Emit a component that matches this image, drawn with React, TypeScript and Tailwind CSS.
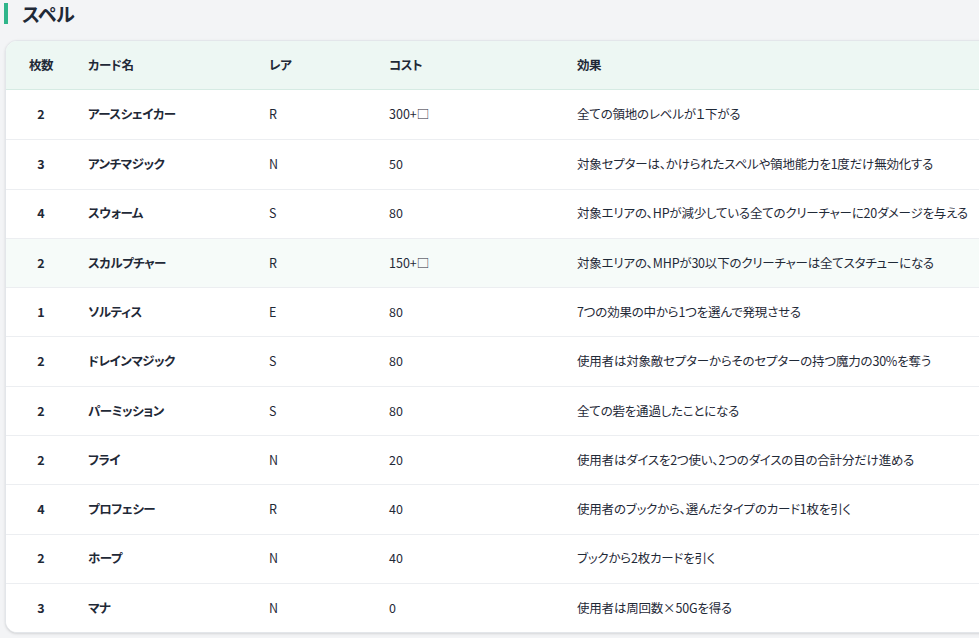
const spells = [
  { n: 2, name: "アースシェイカー", rare: "R", cost: "300+□", effect: "全ての領地のレベルが１下がる" },
  { n: 3, name: "アンチマジック", rare: "N", cost: "50", effect: "対象セプターは、かけられたスペルや領地能力を1度だけ無効化する" },
  { n: 4, name: "スウォーム", rare: "S", cost: "80", effect: "対象エリアの、HPが減少している全てのクリーチャーに20ダメージを与える" },
  { n: 2, name: "スカルプチャー", rare: "R", cost: "150+□", effect: "対象エリアの、MHPが30以下のクリーチャーは全てスタチューになる" },
  { n: 1, name: "ソルティス", rare: "E", cost: "80", effect: "7つの効果の中から1つを選んで発現させる" },
  { n: 2, name: "ドレインマジック", rare: "S", cost: "80", effect: "使用者は対象敵セプターからそのセプターの持つ魔力の30%を奪う" },
  { n: 2, name: "パーミッション", rare: "S", cost: "80", effect: "全ての砦を通過したことになる" },
  { n: 2, name: "フライ", rare: "N", cost: "20", effect: "使用者はダイスを2つ使い、2つのダイスの目の合計分だけ進める" },
  { n: 4, name: "プロフェシー", rare: "R", cost: "40", effect: "使用者のブックから、選んだタイプのカード1枚を引く" },
  { n: 2, name: "ホープ", rare: "N", cost: "40", effect: "ブックから2枚カードを引く" },
  { n: 3, name: "マナ", rare: "N", cost: "0", effect: "使用者は周回数×50Gを得る" },
];

const cols = "grid grid-cols-[70px_181px_120px_188px_1fr]";

export default function App() {
  return (
    <div className="min-h-screen w-screen overflow-hidden bg-[#f3f4f6] pt-[3px] font-['Noto_Sans_CJK_JP',sans-serif] text-[#1f2937] [font-feature-settings:'palt']">
      <h1 className="ml-[4px] flex h-[21px] items-center border-l-4 border-[#2fb58a] pl-[14px] text-[19px] font-bold leading-none tracking-[-0.5px] text-[#1f2937]">
        スペル
      </h1>

      <div className="mt-[16px] ml-[5px] w-[1010px] overflow-hidden rounded-xl border border-[#e3e6ea] bg-white shadow-sm">
        <div className={`${cols} h-[49px] items-center border-b border-[#d6ebe3] bg-[#edf7f3] text-[12.5px] font-bold tracking-[-0.4px]`}>
          <div className="text-center">枚数</div>
          <div className="px-3">カード名</div>
          <div className="px-3">レア</div>
          <div className="px-3">コスト</div>
          <div className="px-3">効果</div>
        </div>
        {spells.map((s, i) => (
          <div
            key={s.name}
            className={`${cols} h-[49.3px] items-center text-[12.5px] ${i > 0 ? "border-t border-[#eceef1]" : ""} ${i === 3 ? "bg-[#f6fbf9]" : "bg-white"}`}
          >
            <div className="text-center font-bold">{s.n}</div>
            <div className="px-3 font-bold tracking-[-0.5px]">{s.name}</div>
            <div className="px-3">{s.rare}</div>
            <div className="px-3">{s.cost}</div>
            <div className="whitespace-nowrap px-3 tracking-[-0.2px]">{s.effect}</div>
          </div>
        ))}
      </div>
    </div>
  );
}
